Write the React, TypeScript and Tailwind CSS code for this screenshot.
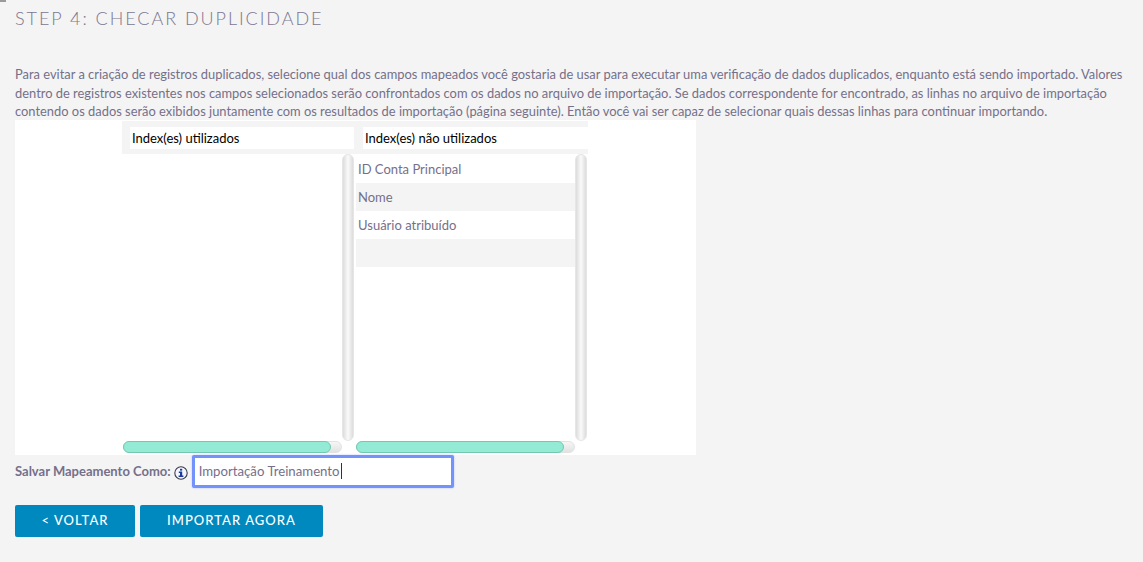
const rows = ['ID Conta Principal', 'Nome', 'Usuário atribuído', ''];

function VScroll() {
  return (
    <div className="w-[12px] h-[287px] mr-[1px] shrink-0 rounded-full border border-[#e6e6e6] bg-[linear-gradient(90deg,#dcdcdc,#fafafa_50%,#dcdcdc)]" />
  );
}

function HScroll() {
  return (
    <div className="w-[219px] h-[12px] rounded-full border border-[#e2e2e2] bg-[linear-gradient(180deg,#f6f6f6,#e2e2e2)]">
      <div className="w-[208px] h-[12px] -mt-px -ml-px rounded-full border border-[#73c9b0] bg-[#93ebd5]" />
    </div>
  );
}

export default function App() {
  return (
    <div className="relative w-[1143px] h-[562px] overflow-hidden bg-[#f4f4f4] font-['Lato','Noto_Sans',sans-serif] text-[#75708a]">
      <div className="absolute left-0 top-0 w-[6px] h-[2px] bg-[#9a9a9a]" />
      <div className="px-[15px]">
        <h1 className="pt-[8px] h-[65px] text-[18px] leading-[20px] font-light tracking-[1.95px] text-[#7b7790]">
          STEP 4: CHECAR DUPLICIDADE
        </h1>
        <p className="w-[1125px] h-[55px] text-[12.9px] leading-[18.5px]">
          Para evitar a criação de registros duplicados, selecione qual dos campos mapeados você gostaria de usar para executar uma verificação de dados duplicados, enquanto está sendo importado. Valores dentro de registros existentes nos campos selecionados serão confrontados com os dados no arquivo de importação. Se dados correspondente for encontrado, as linhas no arquivo de importação contendo os dados serão exibidos juntamente com os resultados de importação (página seguinte). Então você vai ser capaz de selecionar quais dessas linhas para continuar importando.
        </p>
        <div className="w-[681px] h-[335px] bg-white pl-[107px] pt-[1px]">
          <div className="w-[466px] h-[33px] bg-[#f4f4f4] flex items-start pt-[6px] text-[13px] text-black">
            <div className="ml-[8px] w-[224px] h-[22px] bg-white leading-[22px] pl-[2px]">Index(es) utilizados</div>
            <div className="ml-[9px] w-[225px] h-[22px] bg-white leading-[22px] pl-[2px]">Index(es) não utilizados</div>
          </div>
          <div className="flex">
            <div className="w-[233px] pl-[1px]">
              <div className="flex h-[287px]">
                <div className="flex-1" />
                <VScroll />
              </div>
              <HScroll />
            </div>
            <div className="w-[233px] pl-[1px]">
              <div className="flex h-[287px]">
                <div className="flex-1 pt-[1px] text-[13px]">
                  {rows.map((row, i) => (
                    <div key={i} className={`h-[28px] leading-[28px] pl-[2px] ${i % 2 ? 'bg-[#f4f4f4]' : 'bg-white'}`}>
                      {row}
                    </div>
                  ))}
                </div>
                <VScroll />
              </div>
              <HScroll />
            </div>
          </div>
        </div>
        <div className="flex items-center h-[33px] text-[13px]">
          <span className="font-bold">Salvar Mapeamento Como:</span>
          <svg className="ml-[3px] mr-[3px] mt-[2px]" width="14" height="14" viewBox="0 0 14 14">
            <circle cx="7" cy="7" r="6.2" fill="#f4f6ff" stroke="#3a3a48" strokeWidth="1.1" />
            <rect x="6" y="2.8" width="2.2" height="1.8" fill="#1a3aa0" />
            <path d="M4.8 5.6h3.4v4h1.2v1.4H4.6V9.6h1.4V7H4.8z" fill="#1a3aa0" />
          </svg>
          <div className="ml-px w-[262px] h-[33px] bg-white border-[3px] border-[#7393fb] rounded-[2px] shadow-[0_0_2px_#a9bbff] pl-[4px] leading-[27px] text-[13.2px] text-[#75708a]">
            Importação Treinamento<span className="border-l border-[#333] ml-[1px]" />
          </div>
        </div>
        <div className="flex gap-[5px] mt-[17px]">
          <button className="w-[120px] h-[32px] rounded-[2px] bg-[#0089bf] text-white text-[13px] font-medium tracking-[0.08em]">&lt; VOLTAR</button>
          <button className="w-[183px] h-[32px] rounded-[2px] bg-[#0089bf] text-white text-[13px] font-medium tracking-[0.08em]">IMPORTAR AGORA</button>
        </div>
      </div>
    </div>
  );
}
